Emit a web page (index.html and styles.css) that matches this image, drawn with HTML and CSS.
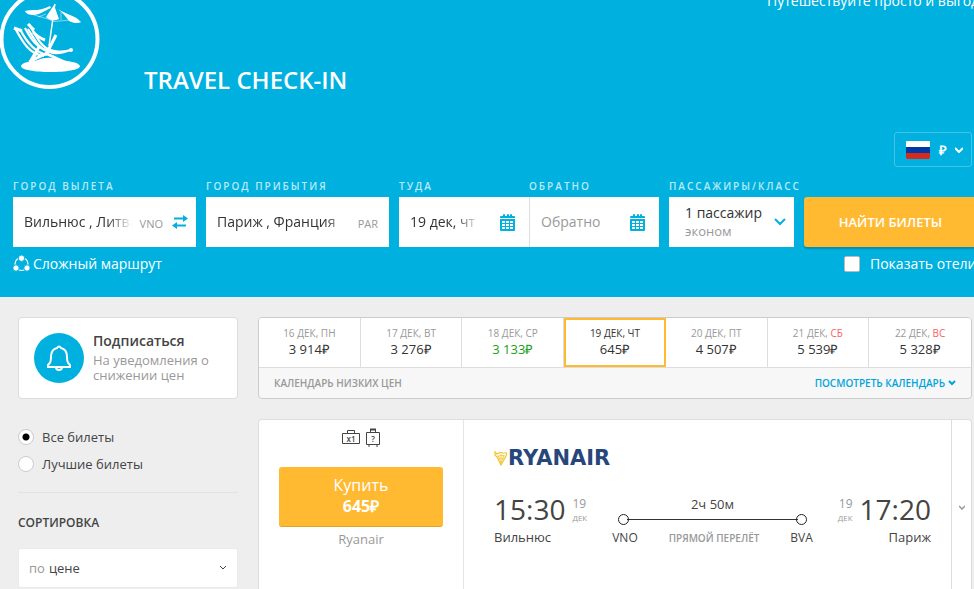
FILE: index.html
```html
<!DOCTYPE html>
<html lang="ru">
<head>
<meta charset="utf-8">
<meta name="viewport" content="width=device-width, initial-scale=1">
<title>Travel Check-in</title>
<link rel="stylesheet" href="styles.css">
</head>
<body>

<header class="header">
  <div class="top">
    <a href="#" class="logo" aria-label="Travel Check-in">
      <svg width="100" height="90" viewBox="0 0 100 90" fill="none" stroke="#fff">
        <circle cx="49.500" cy="39" r="48" stroke-width="4"/>
        <path d="M21 66c1-4 9-4 17-6 6-3 16-3 21 0 8 1 20 2 21 6 0 8-59 8-59 0z" fill="#fff" stroke="none"/>
        <path d="M55 4l-1 5M53 18l-4 28" stroke-width="1.500"/>
        <path d="M54 5l-8 12c4 4 9 4 13 2z" fill="#fff" stroke="none"/>
        <path d="M25 11c6-2 14 1 25-5l1 2c-7 3-10 6-17 7-4 0-8-1-9-4zM58 9c9 6 17 6 23 13-3 2-8 1-12-1-3-4-6-8-11-12z" fill="#fff" stroke="none"/>
        <path d="M31 14l17 5q6 4 12 2l10-1M38 17l8-3M61 12v8" stroke-width="1" opacity=".5"/>
        <path d="M15 28c6 11 14 27 29 28M20 29c5 10 13 23 27 26M25 28c5 9 11 21 26 24" stroke-width="2.200"/>
        <path d="M29 24c7 11 12 26 26 27 6 1 10 1 16-1M28 29c6 9 10 20 22 23 7 3 13 0 18-1" stroke-width="2.200"/>
        <path d="M14 28l8 3M28 24l6 6M33 32q6 6 12 8" stroke-width="3"/>
        <path d="M56 35l-9 18-18 9M39 47l-9 15M45 53l24 11M37 52l-7 11" stroke-width="3"/>
        <circle cx="71" cy="50" r="2" fill="#fff" stroke="none"/>
      </svg>
    </a>
    <h1 class="title">TRAVEL CHECK-IN</h1>
    <p class="slogan">Путешествуйте просто и выгодно</p>
  </div>

  <div class="settings">
    <button type="button" class="currency" aria-label="Язык и валюта">
      <svg width="24" height="18" viewBox="0 0 24 18">
        <rect width="24" height="18" rx="1" fill="#fff"/>
        <path d="M0 6h24v6H0z" fill="#0039a6"/>
        <path d="M0 12h24v5q0 1-1 1H1q-1 0-1-1z" fill="#d52b1e"/>
      </svg>
      <b>₽</b>
      <svg width="8" height="6" viewBox="0 0 8 6" fill="none" stroke="#fff" stroke-width="2"><path d="M0 1l4 4 4-4"/></svg>
    </button>
  </div>

  <form class="search">
    <div class="field">
      <label for="origin">ГОРОД ВЫЛЕТА</label>
      <div class="box">
        <input type="text" id="origin" class="fade" value="Вильнюс , Литва">
        <span class="iata">VNO</span>
        <button type="button" class="swap" aria-label="Поменять местами">
          <svg width="16" height="14" viewBox="0 0 16 14">
            <path d="M2 2.500h9V0l5 3.500L11 7V4.500H2zM14 9.500H5V7l-5 3.500L5 14v-2.500h9z" fill="#00b1df"/>
          </svg>
        </button>
      </div>
    </div>

    <div class="field">
      <label for="destination">ГОРОД ПРИБЫТИЯ</label>
      <div class="box">
        <input type="text" id="destination" class="fade" value="Париж , Франция">
        <span class="iata">PAR</span>
      </div>
    </div>

    <div class="dates">
      <div class="field">
        <label for="depart">ТУДА</label>
        <div class="box">
          <input type="text" id="depart" class="fade" value="19 дек, чт">
          <svg class="calendar-icon" width="15" height="17" viewBox="0 0 15 17">
            <path d="M0 4V3q0-1 1-1h2V1q0-1 1-1t1 1v1h2V1q0-1 1-1t1 1v1h1V1q0-1 1-1t1 1v1h2q1 0 1 1v1zM0 5h15v11q0 1-1 1H1q-1 0-1-1z" fill="#00b1df"/>
            <path d="M2 7h3v2H2zM6 7h3v2H6zM10 7h3v2h-3zM2 10h3v2H2zM6 10h3v2H6zM10 10h3v2h-3zM2 13h3v2H2zM6 13h3v2H6zM10 13h3v2h-3z" fill="#fff"/>
          </svg>
        </div>
      </div>
      <div class="field">
        <label for="return">ОБРАТНО</label>
        <div class="box">
          <input type="text" id="return" placeholder="Обратно">
          <svg class="calendar-icon" width="15" height="17" viewBox="0 0 15 17">
            <path d="M0 4V3q0-1 1-1h2V1q0-1 1-1t1 1v1h2V1q0-1 1-1t1 1v1h1V1q0-1 1-1t1 1v1h2q1 0 1 1v1zM0 5h15v11q0 1-1 1H1q-1 0-1-1z" fill="#00b1df"/>
            <path d="M2 7h3v2H2zM6 7h3v2H6zM10 7h3v2h-3zM2 10h3v2H2zM6 10h3v2H6zM10 10h3v2h-3zM2 13h3v2H2zM6 13h3v2H6zM10 13h3v2h-3z" fill="#fff"/>
          </svg>
        </div>
      </div>
    </div>

    <div class="field">
      <label for="passengers">ПАССАЖИРЫ/КЛАСС</label>
      <button type="button" id="passengers" class="box passengers">
        <span>1 пассажир<small>эконом</small></span>
        <svg width="12" height="8" viewBox="0 0 12 8" fill="none" stroke="#00b1df" stroke-width="2"><path d="M1 1l5 5 5-5"/></svg>
      </button>
    </div>

    <button type="submit" class="find">НАЙТИ БИЛЕТЫ</button>
  </form>

  <div class="options">
    <a href="#" class="multi">
      <svg width="17" height="17" viewBox="0 0 17 17">
        <circle cx="8.500" cy="9" r="6.500" fill="none" stroke="#fff" stroke-width="1.200"/>
        <g fill="#fff" stroke="#00b1df">
          <circle cx="8.500" cy="3.200" r="3.200"/>
          <circle cx="3" cy="13" r="3.200"/>
          <circle cx="14" cy="13" r="3.200"/>
        </g>
      </svg>
      Сложный маршрут
    </a>
    <label class="hotels"><input type="checkbox"> Показать отели</label>
  </div>
</header>

<main class="main">
  <aside class="sidebar">
    <a href="#" class="subscribe">
      <span class="bell">
        <svg width="24" height="28" viewBox="0 0 24 28" fill="none" stroke="#fff" stroke-width="2">
          <path d="M10 4q2-3 4 0c5 1 6 5 6 9 0 5 1 6 3 8v2H1v-2c2-2 3-3 3-8 0-4 1-8 6-9z"/>
          <path d="M9 23q0 3 3 3t3-3"/>
        </svg>
      </span>
      <span class="subscribe-text"><b>Подписаться</b>На уведомления о снижении цен</span>
    </a>

    <div class="filter">
      <label><input type="radio" name="tickets" checked> Все билеты</label>
      <label><input type="radio" name="tickets"> Лучшие билеты</label>
    </div>

    <h2>СОРТИРОВКА</h2>
    <div class="sort">
      <label for="sort">по</label>
      <select id="sort">
        <option>цене</option>
        <option>времени в пути</option>
      </select>
      <svg width="8" height="6" viewBox="0 0 8 6" fill="none" stroke="#444"><path d="M1 1l3 3 3-3"/></svg>
    </div>
  </aside>

  <div class="content">
    <section class="prices">
      <div class="days">
        <button type="button">16 ДЕК, ПН<b>3 914₽</b></button>
        <button type="button">17 ДЕК, ВТ<b>3 276₽</b></button>
        <button type="button" class="cheap">18 ДЕК, СР<b>3 133₽</b></button>
        <button type="button" class="selected">19 ДЕК, ЧТ<b>645₽</b></button>
        <button type="button">20 ДЕК, ПТ<b>4 507₽</b></button>
        <button type="button">21 ДЕК, <i>СБ</i><b>5 539₽</b></button>
        <button type="button">22 ДЕК, <i>ВС</i><b>5 328₽</b></button>
      </div>
      <div class="prices-footer">
        <span>КАЛЕНДАРЬ НИЗКИХ ЦЕН</span>
        <a href="#">ПОСМОТРЕТЬ КАЛЕНДАРЬ
          <svg width="8" height="6" viewBox="0 0 8 6" fill="none" stroke="#00a4dc" stroke-width="2"><path d="M1 1l3 3 3-3"/></svg>
        </a>
      </div>
    </section>

    <article class="ticket">
      <div class="buy">
        <div class="bags">
          <svg width="18" height="20" viewBox="0 0 18 20" fill="none" stroke="#444">
            <path d="M.5 5.500h17v10H.5zM5.500 5.500v-3h7v3"/>
            <text x="9" y="14" class="bag-text">x1</text>
          </svg>
          <svg width="14" height="20" viewBox="0 0 14 20" fill="none" stroke="#444">
            <path d="M.5 4.500h13v12H.5zM4.500 4.500v-3h5v3M3 17v2M11 17v2"/>
            <path d="M4 1.500h6" stroke-width="2"/>
            <text x="7" y="14" class="bag-text">?</text>
          </svg>
        </div>
        <button type="button" class="buy-button">Купить<b>645₽</b></button>
        <p>Ryanair</p>
      </div>

      <div class="flight">
        <div class="airline">
          <svg width="13" height="15" viewBox="0 0 13 15" fill="none" stroke="#f3c431">
            <path d="M1 1l2 2q3-2 6-1l4 0-1 3-5 9-4-8-2-2z" stroke-width="1.200"/>
            <path d="M4 4l3 8M7 3v10M10 4l-3 8M3 6q4-3 8-1M4 8q3-2 6 0" stroke-width=".8"/>
          </svg>
          RYANAIR
        </div>
        <div class="segment">
          <div class="point">
            <div class="time">15:30 <span class="date">19<small>ДЕК</small></span></div>
            Вильнюс
          </div>
          <div class="route">
            <div class="duration">2ч 50м</div>
            <div class="track"></div>
            <div class="stops"><span>VNO</span><b>ПРЯМОЙ ПЕРЕЛЁТ</b><span>BVA</span></div>
          </div>
          <div class="point arrival">
            <div class="time"><span class="date">19<small>ДЕК</small></span> 17:20</div>
            Париж
          </div>
        </div>
      </div>

      <button type="button" class="expand" aria-label="Подробнее">
        <svg width="6" height="5" viewBox="0 0 6 5" fill="none" stroke="#999" stroke-width="1.500"><path d="M0 1l3 3 3-3"/></svg>
      </button>
    </article>
  </div>
</main>

</body>
</html>
```

FILE: styles.css
```css
* {
  box-sizing: border-box;
}

body {
  display: flex;
  flex-direction: column;
  min-height: 100vh;
  margin: 0;
  background: #eee;
  color: #444;
  font: 13px/18px "Open Sans", sans-serif;
}

button, input, select {
  font: inherit;
  color: inherit;
}

button {
  padding: 0;
  border: none;
  background: none;
  cursor: pointer;
}

a {
  text-decoration: none;
}

svg {
  flex: none;
}

/* header */
.header {
  overflow: hidden;
  padding: 0 0 23px 13px;
  background: #00b1df;
  color: #fff;
}

.top {
  display: flex;
  align-items: flex-start;
  height: 132px;
  margin-left: -13px;
}

.title {
  flex: 1;
  margin: 64px 0 0 44px;
  font-size: 24px;
  font-weight: 600;
  line-height: 32px;
}

.slogan {
  width: 207px;
  margin: -8px 0 0;
  font-size: 14px;
  white-space: nowrap;
}

.settings {
  display: flex;
  justify-content: flex-end;
  padding-right: 2px;
}

.currency {
  display: flex;
  align-items: center;
  justify-content: space-between;
  width: 78px;
  height: 35px;
  padding: 0 8px 0 11px;
  border: 1px solid #40c5e7;
  border-radius: 3px;
}

.search {
  display: grid;
  grid-template-columns: 183fr 183fr 260fr 125fr 173fr;
  align-items: end;
  gap: 10px;
  margin: 10px -3px 0 0;
}

.field {
  min-width: 0;
}

.field label {
  display: block;
  height: 20px;
  color: #b8e9f6;
  font-size: 10px;
  font-weight: 600;
  letter-spacing: 2px;
  white-space: nowrap;
}

.box {
  display: flex;
  align-items: center;
  width: 100%;
  height: 50px;
  padding: 0 8px 0 11px;
  background: #fff;
  color: #333;
  font-size: 14px;
}

.box input {
  flex: 1;
  width: 0;
  padding: 0;
  border: none;
  outline: none;
  background: none;
}

.box input::placeholder {
  color: #999;
}

.fade {
  -webkit-mask-image: linear-gradient(to left, transparent, #000 25px);
  mask-image: linear-gradient(to left, transparent, #000 25px);
}

.iata {
  margin: 3px 3px 0 8px;
  color: #999;
  font-size: 11px;
}

.swap {
  display: flex;
  margin-left: 6px;
}

.dates {
  display: grid;
  grid-template-columns: 1fr 1fr;
}

.dates .field + .field .box {
  border-left: 1px solid #ddd;
}

.calendar-icon {
  margin: 0 6px 0 20px;
}

.passengers {
  justify-content: space-between;
  padding: 0 8px 0 16px;
  line-height: 19px;
  text-align: left;
}

.passengers small {
  display: block;
  color: #999;
  font-size: 13px;
}

.find {
  height: 50px;
  border-radius: 3px;
  background: #ffba32;
  box-shadow: 0 2px 2px rgba(0, 0, 0, 0.2);
  font-size: 13px;
  font-weight: 600;
}

.options {
  display: flex;
  justify-content: space-between;
  margin-top: 6px;
  font-size: 14px;
  font-weight: 500;
  line-height: 21px;
}

.multi {
  display: flex;
  align-items: center;
  gap: 3px;
  color: #fff;
}

.hotels {
  display: flex;
  align-items: center;
  gap: 10px;
  width: 130px;
  white-space: nowrap;
}

.hotels input {
  flex: none;
  appearance: none;
  width: 16px;
  height: 16px;
  margin: 0;
  border: 1px solid #bbb;
  border-radius: 2px;
  background: #fff;
}

.hotels input:checked {
  background: #ffba32;
}

/* page */
.main {
  display: flex;
  flex: 1;
  gap: 20px;
  padding: 20px 2px 0 18px;
}

.sidebar {
  width: 220px;
}

.subscribe {
  display: flex;
  align-items: center;
  gap: 9px;
  height: 82px;
  padding: 0 15px;
  border: 1px solid #ddd;
  border-radius: 4px;
  background: #fff;
  color: #999;
  line-height: 15px;
}

.subscribe b {
  display: block;
  margin-bottom: 5px;
  color: #444;
  font-size: 14px;
  font-weight: 600;
}

.bell {
  display: flex;
  flex: none;
  align-items: center;
  justify-content: center;
  width: 50px;
  height: 50px;
  border-radius: 50%;
  background: #00b1df;
}

.filter {
  padding: 29px 0 19px;
  border-bottom: 1px solid #e2e2e2;
}

.filter label {
  display: flex;
  align-items: center;
  gap: 8px;
}

.filter label + label {
  margin-top: 9px;
}

.filter input {
  appearance: none;
  width: 16px;
  height: 16px;
  margin: 0;
  border: 1px solid #ccc;
  border-radius: 50%;
  background: #fff;
}

.filter input:checked {
  background: radial-gradient(#000 3px, #fff 4px);
}

.sidebar h2 {
  margin: 21px 0 16px;
  font-size: 12px;
  font-weight: 600;
}

.sort {
  display: flex;
  align-items: center;
  height: 40px;
  padding: 0 10px;
  border: 1px solid #eaeaea;
  border-radius: 3px;
  background: #fff;
}

.sort label {
  color: #999;
}

.sort select {
  flex: 1;
  appearance: none;
  padding: 0 4px;
  border: none;
  background: none;
}

.content {
  display: flex;
  flex: 1;
  flex-direction: column;
  gap: 20px;
}

/* low price calendar */
.prices {
  border: 1px solid #ccc;
  border-radius: 4px;
  background: #f7f7f7;
}

.days {
  display: grid;
  grid-template-columns: repeat(7, 1fr);
  border-bottom: 1px solid #ddd;
}

.days button {
  height: 49px;
  padding-bottom: 4px;
  border-right: 1px solid #ddd;
  background: #fff;
  color: #999;
  font-size: 10px;
  line-height: 16px;
}

.days button:first-child {
  border-top-left-radius: 3px;
}

.days button:last-child {
  border-right: none;
  border-top-right-radius: 3px;
}

.days b {
  display: block;
  color: #333;
  font-size: 13px;
  font-weight: 400;
}

.days i {
  color: #ff5e5e;
  font-style: normal;
}

.days .cheap b {
  color: #18a018;
}

.days .selected {
  border: 2px solid #ffba32;
  color: #333;
}

.prices-footer {
  display: flex;
  align-items: center;
  justify-content: space-between;
  height: 30px;
  padding: 0 15px;
  color: #999;
  font-size: 10px;
  font-weight: 600;
}

.prices-footer a {
  display: flex;
  align-items: center;
  gap: 3px;
  color: #00a4dc;
}

/* ticket */
.ticket {
  display: flex;
  flex: 1;
  border: 1px solid #ddd;
  border-bottom: none;
  border-radius: 4px 4px 0 0;
  background: #fff;
}

.buy {
  width: 205px;
  padding: 8px 20px 0;
  border-right: 1px solid #e5e5e5;
  text-align: center;
}

.bags {
  display: flex;
  justify-content: center;
  gap: 6px;
  margin-bottom: 19px;
}

.bag-text {
  fill: #444;
  stroke: none;
  font-size: 8px;
  font-weight: 600;
  text-anchor: middle;
}

.buy-button {
  width: 100%;
  height: 60px;
  padding-bottom: 2px;
  border-bottom: 1px solid #e0a32c;
  border-radius: 3px;
  background: #ffba32;
  color: #fff;
  font-size: 16px;
  font-weight: 500;
  line-height: 21px;
}

.buy-button b {
  display: block;
  font-weight: 700;
}

.buy p {
  margin: 3px 0 0;
  color: #999;
}

.flight {
  flex: 1;
  padding: 28px 20px 0 30px;
}

.airline {
  display: flex;
  align-items: center;
  gap: 1px;
  height: 20px;
  margin-bottom: 23px;
  color: #27477a;
  font: bold 21px/20px "DejaVu Sans", sans-serif;
}

.segment {
  display: flex;
  gap: 25px;
}

.time {
  display: flex;
  gap: 7px;
  height: 37px;
  font-size: 28px;
  line-height: 37px;
}

.date {
  padding-top: 6px;
  color: #999;
  font-size: 12px;
  line-height: 14px;
}

.date small {
  display: block;
  font-size: 8px;
}

.arrival {
  text-align: right;
}

.route {
  flex: 1;
  padding-top: 3px;
}

.duration {
  line-height: 20px;
  text-align: center;
}

.track {
  display: flex;
  justify-content: space-between;
  margin: 0 6px 4px;
  background: linear-gradient(#333, #333) center / calc(100% - 18px) 1px no-repeat;
}

.track::before, .track::after {
  content: "";
  width: 9px;
  height: 9px;
  border: 1px solid #222;
  border-radius: 50%;
}

.stops {
  display: flex;
  justify-content: space-between;
  font-size: 12px;
}

.stops b {
  color: #999;
  font-size: 10px;
  font-weight: 600;
}

.expand {
  width: 20px;
  border-left: 1px solid #ddd;
}
```
